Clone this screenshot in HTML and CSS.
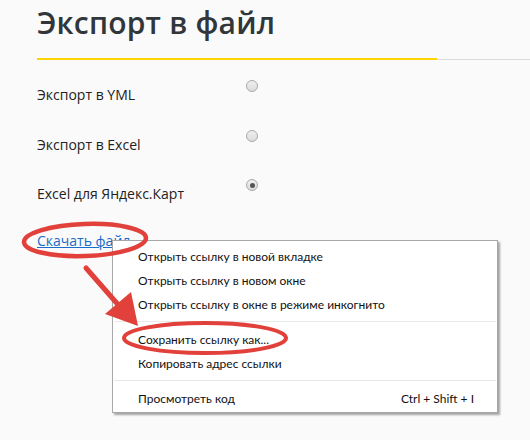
FILE: index.html
```html
<!DOCTYPE html>
<html lang="ru">
<head>
<meta charset="utf-8">
<link rel="stylesheet" href="styles.css">
</head>
<body>
<div class="page">
  <div class="header">
    <h1 class="title">Экспорт в файл</h1>
  </div>
  <div class="rule"><div class="rule-yellow"></div><div class="rule-gray"></div></div>
  <div class="options">
    <div class="row"><span class="label">Экспорт в YML</span><span class="radio"></span></div>
    <div class="row"><span class="label">Экспорт в Excel</span><span class="radio"></span></div>
    <div class="row"><span class="label">Excel для Яндекс.Карт</span><span class="radio checked"></span></div>
  </div>
  <a class="download" href="#">Скачать файл</a>
</div>

<div class="menu">
  <div class="item">Открыть ссылку в новой вкладке</div>
  <div class="item">Открыть ссылку в новом окне</div>
  <div class="item">Открыть ссылку в окне в режиме инкогнито</div>
  <div class="sep"></div>
  <div class="item">Сохранить ссылку как...</div>
  <div class="item">Копировать адрес ссылки</div>
  <div class="sep"></div>
  <div class="item item-split"><span>Просмотреть код</span><span class="shortcut">Ctrl + Shift + I</span></div>
</div>

<svg class="marks" width="530" height="440" viewBox="0 0 530 440">
  <ellipse cx="85" cy="240" rx="61" ry="16" fill="none" stroke="#e2403a" stroke-width="4.5" transform="rotate(-2 85 240)"/>
  <ellipse cx="205" cy="338" rx="81" ry="15" fill="none" stroke="#e2403a" stroke-width="4"/>
  <line x1="86" y1="268" x2="121" y2="308" stroke="#e2403a" stroke-width="5" stroke-linecap="round"/>
  <polygon points="138,326 105,314 131,292" fill="#e2403a"/>
</svg>
</body>
</html>
```

FILE: styles.css
```css
html, body {
  margin: 0;
  padding: 0;
  background: #fafafa;
}
body {
  width: 530px;
  height: 440px;
  overflow: hidden;
  position: relative;
  font-family: "Open Sans", "Noto Sans", sans-serif;
  color: #222;
}
.page {
  padding-left: 37px;
}
.header {
  padding-top: 3px;
  height: 55px;
}
.title {
  margin: 0;
  font-size: 30px;
  line-height: 40px;
  font-weight: 600;
  color: #30363a;
  letter-spacing: 0.2px;
}
.rule {
  display: flex;
  align-items: flex-end;
  height: 2px;
}
.rule-yellow {
  width: 400px;
  height: 2px;
  background: #ffd500;
}
.rule-gray {
  flex: 1;
  height: 1px;
  background: #dcdcdc;
}
.options {
  padding-top: 20px;
  display: flex;
  flex-direction: column;
}
.row {
  display: flex;
  height: 49.5px;
}
.label {
  width: 209px;
  padding-top: 5px;
  font-size: 14px;
  line-height: 20px;
  color: #222;
}
.radio {
  width: 10px;
  height: 10px;
  margin-top: 0px;
  border: 1px solid #a9a9a9;
  border-radius: 50%;
  background: linear-gradient(#efefef, #dcdcdc);
  display: flex;
  align-items: center;
  justify-content: center;
}
.radio.checked::after {
  content: "";
  width: 5px;
  height: 5px;
  border-radius: 50%;
  background: #555;
}
.download {
  display: inline-block;
  margin-top: -3px;
  font-size: 14px;
  line-height: 20px;
  color: #1a6cc8;
  text-decoration: underline;
}
.menu {
  position: absolute;
  left: 112px;
  top: 240px;
  width: 384px;
  padding: 4px 0 1px;
  background: #fff;
  border: 1px solid #a7a7a7;
  box-shadow: 2px 2px 2px rgba(0, 0, 0, 0.35);
  font-family: Lato, "Open Sans", sans-serif;
  font-size: 12px;
  color: #111;
}
.item {
  height: 24px;
  line-height: 24px;
  padding-left: 25px;
  padding-right: 23px;
}
.item-split {
  display: flex;
  justify-content: space-between;
}
.sep {
  height: 1px;
  margin: 4px 1px 6px;
  background: #e9e9e9;
}
.marks {
  position: absolute;
  left: 0;
  top: 0;
  pointer-events: none;
}
```
